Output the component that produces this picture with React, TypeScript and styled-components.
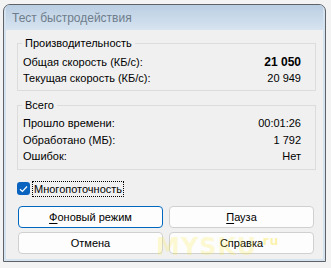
import * as React from 'react';
import styled, { createGlobalStyle } from 'styled-components';

const GlobalStyle = createGlobalStyle`
  html, body {
    margin: 0;
    padding: 0;
    background: #f3f3f3;
    font-family: "Liberation Sans", Arial, sans-serif;
    font-size: 11px;
    color: #000;
  }
`;

interface Row {
  label: string;
  value: string;
  bold?: boolean;
}

const perfRows: Row[] = [
  { label: 'Общая скорость (КБ/с):', value: '21 050', bold: true },
  { label: 'Текущая скорость (КБ/с):', value: '20 949' },
];

const totalRows: Row[] = [
  { label: 'Прошло времени:', value: '00:01:26' },
  { label: 'Обработано (МБ):', value: '1 792' },
  { label: 'Ошибок:', value: 'Нет' },
];

const App = () => (
  <>
    <GlobalStyle />
    <Window>
      <TitleBar>Тест быстродействия</TitleBar>
      <Body>
        <Group>
          <Legend>Производительность</Legend>
          {perfRows.map((r) => (
            <StatRow key={r.label}>
              <span>{r.label}</span>
              <Value bold={r.bold}>{r.value}</Value>
            </StatRow>
          ))}
        </Group>

        <Group $second>
          <Legend>Всего</Legend>
          {totalRows.map((r) => (
            <StatRow key={r.label} $tall>
              <span>{r.label}</span>
              <Value>{r.value}</Value>
            </StatRow>
          ))}
        </Group>

        <CheckRow>
          <CheckBox>
            <svg width="9" height="8" viewBox="0 0 9 8">
              <path d="M1 4.2 L3.4 6.5 L8 1.5" fill="none" stroke="#fff" strokeWidth="1.2" />
            </svg>
          </CheckBox>
          <CheckLabel>Многопоточность</CheckLabel>
        </CheckRow>

        <Buttons>
          <Button $primary>
            <u>Ф</u>оновый режим
          </Button>
          <Button>
            <u>П</u>ауза
          </Button>
          <Button>Отмена</Button>
          <Button>Справка</Button>
        </Buttons>

        <Watermark>
          MYSKU<small>.ru</small>
        </Watermark>
      </Body>
    </Window>
  </>
);

const Window = styled.div`
  margin: 4px 0 0 3px;
  width: 323px;
  height: 258px;
  box-sizing: border-box;
  border: 1px solid #5f6367;
  border-radius: 7px 7px 0 0;
  background: #d5e2ef;
  padding: 0 2px 2px;
  display: flex;
  flex-direction: column;
  overflow: hidden;
`;

const TitleBar = styled.div`
  height: 25px;
  flex: none;
  display: flex;
  align-items: center;
  padding-left: 6px;
  font-size: 12px;
  color: #6f7d8b;
  background: linear-gradient(#bacee2, #d7e4f1);
`;

const Body = styled.div`
  position: relative;
  flex: 1;
  background: #f0f0f0;
  padding: 5px 7px 0 11px;
  overflow: hidden;
`;

const Group = styled.fieldset<{ $second?: boolean }>`
  margin: ${(p) => (p.$second ? '6px' : '0')} 0 0 0;
  border: 1px solid #dcdcdc;
  padding: ${(p) => (p.$second ? '2px' : '3px')} 14px 4px 5px;
  min-width: 0;
`;

const Legend = styled.legend`
  margin-left: -1px;
  padding: 0 3px;
  line-height: 16px;
`;

const StatRow = styled.div<{ $tall?: boolean }>`
  display: flex;
  justify-content: space-between;
  line-height: ${(p) => (p.$tall ? '16.5px' : '16px')};
  white-space: nowrap;
`;

const Value = styled.span<{ bold?: boolean }>`
  font-weight: ${(p) => (p.bold ? 700 : 400)};
  font-size: ${(p) => (p.bold ? '12px' : '11px')};
`;

const CheckRow = styled.div`
  display: flex;
  align-items: center;
  margin-top: 11px;
  height: 16px;
  gap: 2px;
`;

const CheckBox = styled.span`
  width: 13px;
  height: 13px;
  border-radius: 3px;
  background: #0a64bf;
  display: flex;
  align-items: center;
  justify-content: center;
`;

const CheckLabel = styled.span`
  border: 1px dotted #000;
  padding: 0 1px;
  line-height: 14px;
`;

const Buttons = styled.div`
  display: grid;
  grid-template-columns: 145px 145px;
  gap: 4px 6px;
  margin: 9px 0 0 1px;
`;

const Button = styled.button<{ $primary?: boolean }>`
  height: 22px;
  box-sizing: border-box;
  font: inherit;
  color: #000;
  background: #fdfdfd;
  border: 1px solid ${(p) => (p.$primary ? '#0067c0' : '#d0d0d0')};
  border-radius: 4px;
  padding: 0;

  u {
    text-underline-offset: 2px;
  }
`;

const Watermark = styled.div`
  position: absolute;
  left: 150px;
  bottom: 0;
  line-height: 24px;
  font-family: "DejaVu Sans", sans-serif;
  font-weight: 700;
  font-size: 24px;
  color: rgba(250, 235, 60, 0.22);
  pointer-events: none;
  letter-spacing: 1px;

  small {
    font-size: 12px;
    vertical-align: 10px;
    color: rgba(250, 225, 40, 0.4);
  }
`;

export default App;
